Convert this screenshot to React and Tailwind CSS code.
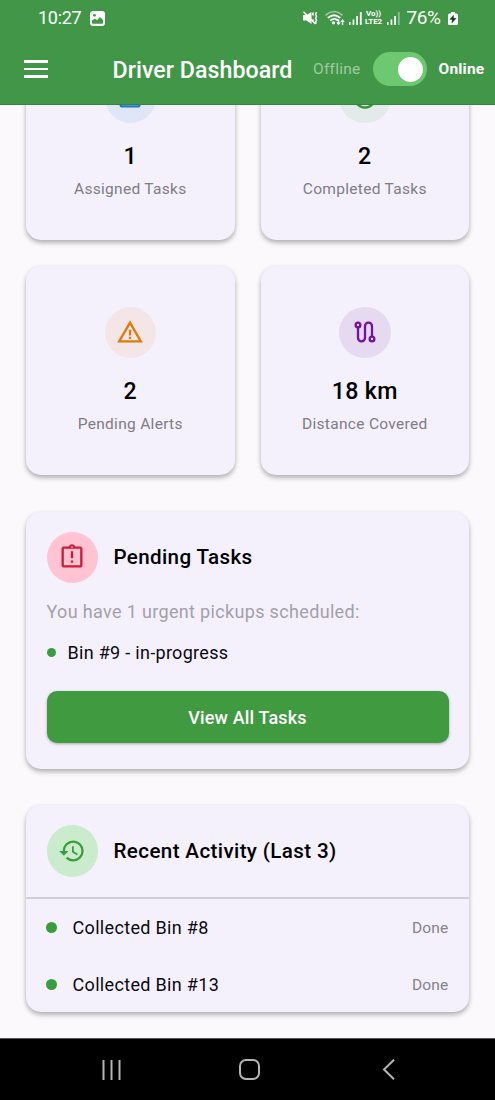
import { MdHistory, MdOutlineAssignment, MdOutlineAssignmentLate, MdCheckCircleOutline, MdWarningAmber } from 'react-icons/md'

const CARD = 'rounded-[15px] bg-[#f4f1fd] shadow-[0_3px_5px_rgba(0,0,0,0.25),0_1px_4px_rgba(0,0,0,0.08)]'

const STATS = [
  { label: 'Assigned Tasks', value: '1', icon: MdOutlineAssignment, tone: 'bg-[#dfe6f8] text-[#1976d2]' },
  { label: 'Completed Tasks', value: '2', icon: MdCheckCircleOutline, tone: 'bg-[#e3ebea] text-[#388e3c]' },
  { label: 'Pending Alerts', value: '2', icon: MdWarningAmber, tone: 'bg-[#f4e6e6] text-[#e17b0c]' },
  { label: 'Distance Covered', value: '18 km', icon: RouteIcon, tone: 'bg-[#e6daf1] text-[#7412a4]' },
]

const ACTIVITY = [
  { id: 8, title: 'Collected Bin #8', status: 'Done' },
  { id: 13, title: 'Collected Bin #13', status: 'Done' },
]

export default function App() {
  return (
    <div className="flex h-[1100px] w-[495px] flex-col overflow-hidden bg-[#fcf9fd] font-[Roboto,sans-serif] text-[#0b0910]">
      <header className="z-10 h-[105px] shrink-0 border-b border-[#35853a] bg-[#419647] text-white">
        <StatusBar />
        <AppBar />
      </header>
      <main className="min-h-0 flex-1 overflow-hidden px-[26px]">
        <div className="-mt-[74px] grid grid-cols-2 gap-[26px]">
          {STATS.map(s => <StatCard key={s.label} {...s} />)}
        </div>
        <PendingTasks />
        <RecentActivity />
      </main>
      <NavBar />
    </div>
  )
}

function StatusBar() {
  return (
    <div className="flex h-[36px] items-center pr-[37.5px] pl-[38px]">
      <span className="-mt-[1px] w-[52px] text-[18px] tracking-[-0.3px]">10:27</span>
      <svg className="h-[15px] w-[15px]" viewBox="0 0 15 15">
        <rect width="15" height="15" rx="3" fill="white" />
        <circle cx="4.5" cy="4.3" r="1.4" fill="#419647" />
        <path d="M2 12V9.8L4.7 7.6 7 9.3l3-3.2 3 3V12q0 .8-.8.8H2.8Q2 12.8 2 12z" fill="#419647" />
      </svg>
      <div className="ml-auto flex items-center">
        {/* mute + vibrate */}
        <svg className="h-[14px] w-[15px]" viewBox="0 0 15 14" fill="none" stroke="white">
          <path d="M0 4h3.5L8.5 1v12L3.5 9.5H0z" fill="white" stroke="none" />
          <path d="M.5.8L12.5 13" strokeWidth="1.5" />
          <path d="M10.5 1.5l-.8 1.5.8 1.5M10.5 8.5l-.8 1 .8 1M13.5 1.2l-.9 2 .9 2-.9 2 .9 2-.9 2 .5 1.5" strokeWidth="1.5" />
        </svg>
        <svg className="ml-[7px] h-[16px] w-[20px]" viewBox="0 0 20 16" fill="none" stroke="white" strokeLinecap="round">
          <path d="M1 4.8Q9 -1.8 17 4.8" strokeWidth="1.6" opacity=".5" />
          <path d="M3.4 7.5Q9 2.9 14.6 7.5M5.8 10.2Q9 7.6 12.2 10" strokeWidth="1.8" />
          <circle cx="8.5" cy="12.8" r="1.6" fill="white" stroke="none" />
          <path d="M13.5 10v3" strokeWidth="1.4" />
          <path d="M11.3 12.3h4.4l-2.2 3zM15.3 12h4.4l-2.2-3z" fill="white" stroke="none" />
          <path d="M17.5 11.5v3" strokeWidth="1.4" />
        </svg>
        <Signal className="ml-[4px]" />
        <span className="ml-[2px] flex w-[20px] flex-col items-center text-[8px] leading-[8px] font-bold tracking-[-0.1px]">
          <span>Vo))</span>
          <span>LTE2</span>
        </span>
        <Signal className="ml-[3px]" dim />
        <span className="-mt-[1px] ml-[7px] w-[41px] text-[19px] leading-[22px] tracking-[-0.4px] whitespace-nowrap">76%</span>
        <svg className="h-[13px] w-[10px]" viewBox="0 0 10 13">
          <path d="M3 0h4v1.5h1.5Q10 1.5 10 3v8.5Q10 13 8.5 13h-7Q0 13 0 11.5V3Q0 1.5 1.5 1.5H3z" fill="white" />
          <path d="M5.5 3.2L1.8 7.6h2.4L4 10.9l4.2-4.6H5.6z" fill="#153b18" stroke="#153b18" strokeWidth=".4" />
        </svg>
      </div>
    </div>
  )
}

function Signal({ className, dim }) {
  return (
    <svg className={`h-[13px] w-[13px] ${className}`} viewBox="0 0 13 13" fill="white">
      <rect x="0" y="10" width="1.6" height="3" />
      <rect x="3.6" y="7.5" width="1.7" height="5.5" />
      <rect x="7.2" y="4" width="1.8" height="9" />
      <rect x="10.9" y="0" width="1.8" height="13" opacity={dim ? 0.4 : 1} />
    </svg>
  )
}

function AppBar() {
  return (
    <div className="flex h-[66px] items-center pl-[24px]">
      <button className="flex w-[24px] flex-col gap-[5px]" aria-label="Menu">
        <span className="h-[2.5px] bg-white" />
        <span className="h-[2.5px] bg-white" />
        <span className="h-[2.5px] bg-white" />
      </button>
      <h1 className="mt-[2px] ml-[64.5px] w-[200.5px] text-[23.2px] font-medium tracking-[0.05px] whitespace-nowrap">Driver Dashboard</h1>
      <span className="mt-[2px] w-[60px] text-[15.5px] tracking-[0.25px] text-white/50">Offline</span>
      <span className="flex h-[34px] w-[54px] items-center justify-end rounded-full bg-[#6dc86f] pr-[4.5px]">
        <span className="h-[25px] w-[25px] rounded-full bg-white" />
      </span>
      <span className="mt-[2px] ml-[11.5px] text-[15.5px] font-bold tracking-[0.2px]">Online</span>
    </div>
  )
}

function StatCard({ label, value, icon: Icon, tone }) {
  return (
    <div className={`flex h-[209px] flex-col items-center pt-[40.5px] ${CARD}`}>
      <IconBubble icon={Icon} tone={tone} />
      <p className="mt-[16.5px] text-[23.2px] leading-[32px] font-medium tracking-[0.3px] text-black">{value}</p>
      <p className="mt-[7px] text-[15.5px] leading-[21px] tracking-[0.3px] text-[#7f7c86]">{label}</p>
    </div>
  )
}

function IconBubble({ icon: Icon, tone }) {
  return (
    <span className={`flex h-[51.5px] w-[51.5px] shrink-0 items-center justify-center rounded-full ${tone}`}>
      <Icon className="h-[28px] w-[28px]" />
    </span>
  )
}

function RouteIcon({ className }) {
  return (
    <svg className={className} viewBox="0 0 24 24" fill="none" stroke="currentColor" strokeWidth="2">
      <circle cx="6" cy="6" r="2" />
      <circle cx="18" cy="18" r="2" />
      <path d="M6 8v9a3 3 0 0 0 6 0V7a3 3 0 0 1 6 0v9" />
    </svg>
  )
}

function PendingTasks() {
  return (
    <section className={`mt-[37px] h-[257px] px-[20.5px] pt-[19.5px] ${CARD}`}>
      <div className="flex items-center gap-[15.5px]">
        <IconBubble icon={MdOutlineAssignmentLate} tone="bg-[#ffc3d2] text-[#c91d3b]" />
        <h2 className="mt-[1px] text-[20.6px] font-medium tracking-[0.35px] text-black">Pending Tasks</h2>
      </div>
      <p className="mt-[15.5px] text-[18px] leading-[26px] tracking-[0.34px] text-[#a3a0a9]">You have 1 urgent pickups scheduled:</p>
      <div className="mt-[15px] flex items-center gap-[11px]">
        <span className="h-[9px] w-[9px] rounded-full bg-[#389e3c]" />
        <span className="ml-[1px] text-[18px] leading-[26px] tracking-[0.3px]">Bin #9 - in-progress</span>
      </div>
      <button className="mt-[25.5px] flex h-[51.5px] w-full items-center justify-center rounded-[10px] bg-[#409a40] pt-[1px] text-[18px] font-medium tracking-[0.15px] text-white shadow-[0_1px_3px_rgba(0,0,0,0.3)]">
        View All Tasks
      </button>
    </section>
  )
}

function RecentActivity() {
  return (
    <section className={`mt-[36px] h-[207px] ${CARD}`}>
      <div className="flex h-[94px] items-center gap-[15.5px] border-b-2 border-[#cfcfdc] px-[20.5px]">
        <IconBubble icon={MdHistory} tone="bg-[#cbebcd] text-[#389e3c]" />
        <h2 className="text-[20.6px] font-medium tracking-[0.38px] text-black">Recent Activity (Last 3)</h2>
      </div>
      {ACTIVITY.map(a => (
        <div key={a.id} className="flex h-[57px] items-center pr-[20.5px] pl-[20px]">
          <span className="h-[11px] w-[11px] rounded-full bg-[#389e3c]" />
          <span className="ml-[15.5px] text-[18px] tracking-[0.33px]">{a.title}</span>
          <span className="mt-[2px] ml-auto text-[15.5px] tracking-[0.2px] text-[#85828b]">{a.status}</span>
        </div>
      ))}
    </section>
  )
}

function NavBar() {
  return (
    <nav className="flex h-[62px] shrink-0 items-center border-t border-[#55555a] bg-black pl-[102px] text-[#b4b4b6]">
      <svg className="h-[20px] w-[19px]" viewBox="0 0 19 20" stroke="currentColor" strokeWidth="2">
        <path d="M1.5 0v20M9.5 0v20M17.5 0v20" />
      </svg>
      <svg className="ml-[118px] h-[21px] w-[21px]" viewBox="0 0 21 21" fill="none" stroke="currentColor" strokeWidth="2">
        <rect x="1" y="1" width="19" height="19" rx="6" />
      </svg>
      <svg className="ml-[122px] h-[21px] w-[13px]" viewBox="0 0 13 21" fill="none" stroke="currentColor" strokeWidth="2">
        <path d="M12 .7L2 10.5l10 9.8" />
      </svg>
    </nav>
  )
}
